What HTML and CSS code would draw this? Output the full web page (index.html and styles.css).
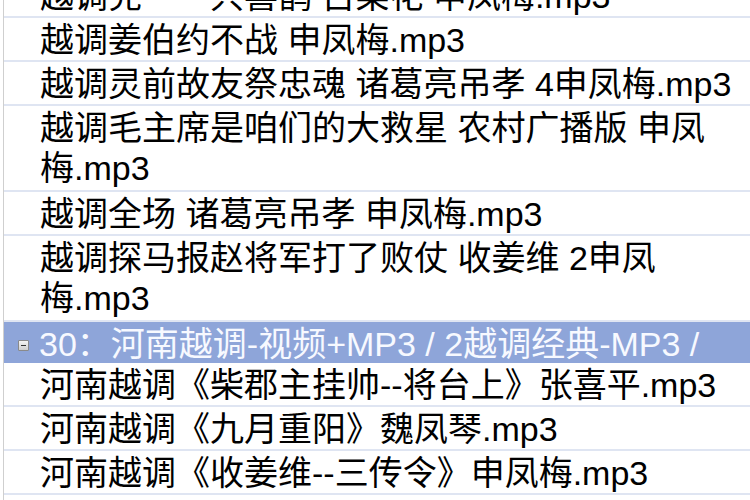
FILE: index.html
```html
<!DOCTYPE html>
<html lang="zh-CN">
<head>
<meta charset="utf-8">
<title>列表</title>
<link rel="stylesheet" href="styles.css">
</head>
<body>
<div class="tree">
  <ul class="list">
    <li class="row">越调兑　一只喜鹊 古菜花 申凤梅.mp3</li>
    <li class="row">越调姜伯约不战 申凤梅.mp3</li>
    <li class="row">越调灵前故友祭忠魂 诸葛亮吊孝 4申凤梅.mp3</li>
    <li class="row row-wrap">越调毛主席是咱们的大救星 农村广播版 申凤梅.mp3</li>
    <li class="row">越调全场 诸葛亮吊孝 申凤梅.mp3</li>
    <li class="row row-wrap">越调探马报赵将军打了败仗 收姜维 2申凤梅.mp3</li>
    <li class="group"><span class="toggle"></span><span class="group-text">30：河南越调-视频+MP3 / 2越调经典-MP3 /</span></li>
    <li class="row">河南越调《柴郡主挂帅--将台上》张喜平.mp3</li>
    <li class="row">河南越调《九月重阳》魏凤琴.mp3</li>
    <li class="row">河南越调《收姜维--三传令》申凤梅.mp3</li>
  </ul>
</div>
</body>
</html>
```

FILE: styles.css
```css
html, body {
  margin: 0;
  padding: 0;
  background: #ffffff;
}

body {
  width: 750px;
  height: 500px;
  overflow: hidden;
  font-family: "Liberation Sans", "Noto Sans CJK SC", sans-serif;
  font-size: 34px;
  color: #000000;
}

.tree {
  margin-left: 3px;
  height: 500px;
  border-left: 1px solid #cfcfcf;
  overflow: hidden;
}

.list {
  list-style: none;
  margin: -26px 0 0 0;
  padding: 0;
}

.row {
  padding: 2px 12px 0 36px;
  line-height: 40px;
  border-bottom: 2px solid #dfe5f2;
}

.row-wrap {
  padding-bottom: 2px;
}

.group {
  display: flex;
  align-items: center;
  height: 41px;
  padding-left: 14px;
  background: #8ea5d9;
  color: #f7f9ff;
  white-space: nowrap;
  overflow: hidden;
}

.toggle {
  flex: none;
  width: 9px;
  height: 9px;
  border: 1px solid #8a8a8a;
  border-radius: 1px;
  background: linear-gradient(#f4f4f4, #cfcfcf);
  position: relative;
  margin-right: 10px;
  margin-top: 5px;
}

.toggle::after {
  content: "";
  position: absolute;
  left: 2px;
  right: 2px;
  top: 4px;
  height: 1px;
  background: #333333;
}

.group-text {
  line-height: 42px;
  padding-top: 2px;
}
```
